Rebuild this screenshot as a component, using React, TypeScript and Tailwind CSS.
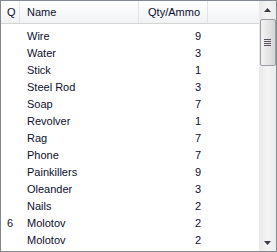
import React from "react";

const rows = [
  { q: "", name: "Wire", qty: 9 },
  { q: "", name: "Water", qty: 3 },
  { q: "", name: "Stick", qty: 1 },
  { q: "", name: "Steel Rod", qty: 3 },
  { q: "", name: "Soap", qty: 7 },
  { q: "", name: "Revolver", qty: 1 },
  { q: "", name: "Rag", qty: 7 },
  { q: "", name: "Phone", qty: 7 },
  { q: "", name: "Painkillers", qty: 9 },
  { q: "", name: "Oleander", qty: 3 },
  { q: "", name: "Nails", qty: 2 },
  { q: "6", name: "Molotov", qty: 2 },
  { q: "", name: "Molotov", qty: 2 },
];

function HeaderCell({ children, className = "" }: { children?: React.ReactNode; className?: string }) {
  return (
    <div className={`h-full flex items-center border-r border-[#e3e4e6] ${className}`}>{children}</div>
  );
}

export default function App() {
  return (
    <div
      className="w-[277px] h-[252px] border border-[#828790] bg-white flex overflow-hidden text-[11px] text-[#0c0f2e]"
      style={{ fontFamily: '"Liberation Sans", Arial, sans-serif' }}
    >
      {/* list */}
      <div className="flex-1 flex flex-col min-w-0">
        <div className="h-[23px] flex bg-gradient-to-b from-white to-[#f1f2f4] border-b border-[#d5d5d5]">
          <HeaderCell className="w-[19px] pl-[6px]">Q</HeaderCell>
          <HeaderCell className="w-[119px] pl-[7px]">Name</HeaderCell>
          <HeaderCell className="w-[69px] justify-end pr-[7px]">Qty/Ammo</HeaderCell>
          <div className="flex-1" />
        </div>
        <div className="flex flex-col pt-[3px]">
          {rows.map((r, i) => (
            <div key={i} className="h-[17px] flex items-center pt-[1px]">
              <div className="w-[19px] pl-[6px]">{r.q}</div>
              <div className="w-[119px] pl-[7px]">{r.name}</div>
              <div className="w-[69px] text-right pr-[7px]">{r.qty}</div>
            </div>
          ))}
        </div>
      </div>

      {/* scrollbar */}
      <div className="w-[17px] h-full bg-gradient-to-r from-[#e9e9e9] via-[#f4f4f4] to-[#ececec] flex flex-col items-center">
        <div className="h-[17px] w-full flex items-center justify-center">
          <svg width="7" height="4" viewBox="0 0 7 4">
            <path d="M3.5 0 L7 4 L0 4 Z" fill="#3c3c48" />
          </svg>
        </div>
        <div className="mt-[1px] h-[47px] w-[16px] rounded-[2px] border border-[#9a9ea4] bg-gradient-to-r from-[#f3f3f3] via-[#e6e6e6] to-[#d6d6d6] flex items-center justify-center">
          <div className="flex flex-col gap-[1px]">
            <div className="w-[7px] h-[1px] bg-[#5a5060]" />
            <div className="w-[7px] h-[1px] bg-[#5a5060]" />
            <div className="w-[7px] h-[1px] bg-[#5a5060]" />
            <div className="w-[7px] h-[1px] bg-[#5a5060]" />
          </div>
        </div>
        <div className="flex-1" />
        <div className="h-[17px] w-full flex items-center justify-center">
          <svg width="7" height="4" viewBox="0 0 7 4">
            <path d="M0 0 L7 0 L3.5 4 Z" fill="#3c3c48" />
          </svg>
        </div>
      </div>
    </div>
  );
}
